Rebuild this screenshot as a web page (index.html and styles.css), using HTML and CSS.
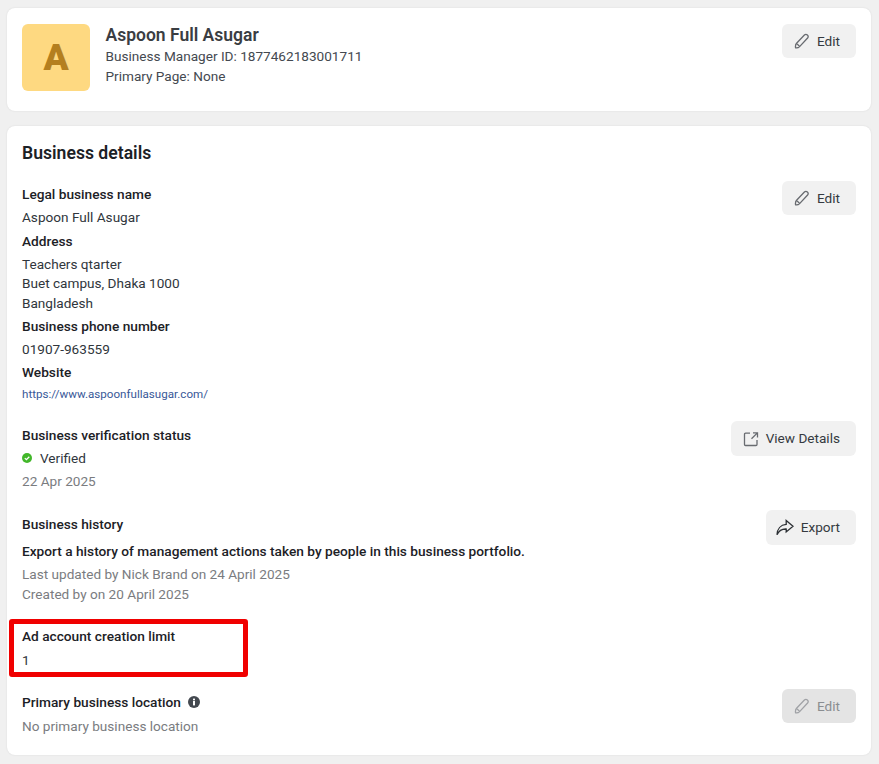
FILE: index.html
```html
<!DOCTYPE html>
<html lang="en">
<head>
<meta charset="utf-8">
<title>Business info</title>
<link rel="stylesheet" href="styles.css">
</head>
<body>
<section class="card top-card">
  <div class="avatar">A</div>
  <div class="top-info">
    <div class="biz-name">Aspoon Full Asugar</div>
    <div class="biz-line">Business Manager ID: 1877462183001711</div>
    <div class="biz-line">Primary Page: None</div>
  </div>
  <button class="btn"><svg class="ico" viewBox="0 0 16 16"><path d="M2.6 10.3 10.4 2a2.2 2.2 0 0 1 3.2 3l-8 8.6c-1 1-2.6 1.5-4 1.2-.3-1.5 0-3.4 1-4.5zM2.6 10.3l3 3.3" /></svg><span class="btn-text">Edit</span></button>
</section>

<section class="card details">
  <h2 class="title">Business details</h2>

  <div class="row legal">
    <div class="col">
      <div class="label">Legal business name</div>
      <div class="val first">Aspoon Full Asugar</div>
      <div class="label">Address</div>
      <div class="val tight street">Teachers qtarter</div>
      <div class="val tight">Buet campus, Dhaka 1000</div>
      <div class="val">Bangladesh</div>
      <div class="label">Business phone number</div>
      <div class="val">01907-963559</div>
      <div class="label">Website</div>
      <a class="link" href="#">https://www.aspoonfullasugar.com/</a>
    </div>
    <button class="btn"><svg class="ico" viewBox="0 0 16 16"><path d="M2.6 10.3 10.4 2a2.2 2.2 0 0 1 3.2 3l-8 8.6c-1 1-2.6 1.5-4 1.2-.3-1.5 0-3.4 1-4.5zM2.6 10.3l3 3.3" /></svg><span class="btn-text">Edit</span></button>
  </div>

  <div class="row verify">
    <div class="col">
      <div class="label">Business verification status</div>
      <div class="val status"><svg class="check" viewBox="0 0 10 10"><circle cx="5" cy="5" r="5" fill="#42b72a"/><path d="M2.8 5.1 4.4 6.6 7.3 3.7" fill="none" stroke="#fff" stroke-width="1.3"/></svg>Verified</div>
      <div class="val muted date">22 Apr 2025</div>
    </div>
    <button class="btn tall"><svg class="ico" viewBox="0 0 16 16"><path d="M7 2.2H2.5a1 1 0 0 0-1 1v10.3a1 1 0 0 0 1 1H13a1 1 0 0 0 1-1V9M10 1.8h4.5v4.6M14.4 1.9 8.5 7.8" /></svg><span class="btn-text">View Details</span></button>
  </div>

  <div class="row history">
    <div class="col">
      <div class="label">Business history</div>
      <div class="label desc">Export a history of management actions taken by people in this business portfolio.</div>
      <div class="val muted tight updated">Last updated by Nick Brand on 24 April 2025</div>
      <div class="val muted">Created by on 20 April 2025</div>
    </div>
    <button class="btn tall export"><svg class="ico ico-dark" viewBox="0 0 18 17"><path d="M10.2 1.5 17 7.3l-6.8 5.6V10C6 9.8 3 11.5 1 15.8c.2-5.8 3.6-10 9.2-10.4z" /></svg><span class="btn-text">Export</span></button>
  </div>

  <div class="limit">
    <div class="label">Ad account creation limit</div>
    <div class="val">1</div>
    <div class="highlight"></div>
  </div>

  <div class="row location">
    <div class="col">
      <div class="label">Primary business location<svg class="info" viewBox="0 0 12 12"><circle cx="6" cy="6" r="6" fill="#444950"/><rect x="5" y="5" width="2" height="4.4" fill="#fff"/><rect x="5" y="2.6" width="2" height="1.7" fill="#fff"/></svg></div>
      <div class="val muted">No primary business location</div>
    </div>
    <button class="btn disabled"><svg class="ico" viewBox="0 0 16 16"><path d="M2.6 10.3 10.4 2a2.2 2.2 0 0 1 3.2 3l-8 8.6c-1 1-2.6 1.5-4 1.2-.3-1.5 0-3.4 1-4.5zM2.6 10.3l3 3.3" /></svg><span class="btn-text">Edit</span></button>
  </div>
</section>
</body>
</html>
```

FILE: styles.css
```css
* { box-sizing: border-box; }
html, body { height: 100%; }
body {
  margin: 0;
  padding: 8px 8px 0 7px;
  background: #f0f0f0;
  font-family: Roboto, "Liberation Sans", sans-serif;
  font-size: 13.6px;
  color: #1c2b33;
  overflow: hidden;
}
.card {
  background: #fff;
  border-radius: 8px;
  box-shadow: 0 0 2px rgba(0,0,0,.1);
}
.top-card {
  height: 102.5px;
  padding: 16px 15px;
  display: flex;
  align-items: flex-start;
  margin-bottom: 15.5px;
}
.avatar {
  width: 68px;
  height: 67px;
  border-radius: 6px;
  background: #fed981;
  color: #b47f1f;
  font-size: 37px;
  font-weight: 900;
  display: flex;
  align-items: center;
  justify-content: center;
  margin-right: 15.5px;
}
.top-info { flex: 1; color: #444950; }
.biz-name { font-size: 17.5px; font-weight: 600; line-height: 22px; margin-bottom: 1px; color: #3a3d42; }
.biz-line { line-height: 19.5px; font-size: 13.6px; }
.btn {
  display: inline-flex;
  align-items: center;
  height: 34px;
  padding: 0 16px 0 12px;
  border: 0;
  border-radius: 6px;
  background: #f1f1f1;
  color: #353a40;
  font: 400 13.6px Roboto, "Liberation Sans", sans-serif;
  flex: none;
}
.btn-text { margin-top: -1px; }
.tall { height: 35px; }
.ico {
  width: 16px;
  height: 16px;
  margin-right: 7px;
  fill: none;
  stroke: #686b70;
  stroke-width: 1.3;
}
.ico-dark { width: 18px; height: 17px; stroke: #2b2f33; }
.export { padding-left: 10px; }
.disabled { background: #e4e4e4; color: #8a8d91; }
.disabled .ico { stroke: #a0a2a6; }
.details { height: 629px; padding: 15px 15px 16px; }
.title { margin: 0; font-size: 17.6px; font-weight: 600; line-height: 24px; color: #1c2126; }
.row { display: flex; justify-content: space-between; align-items: flex-start; }
.col { display: flex; flex-direction: column; }
.label { font-weight: 500; line-height: 20px; font-size: 13.7px; color: #1c2126; }
.val { line-height: 20px; margin: 3px 0; color: #30363c; }
.val.first { margin-bottom: 4px; }
.val.tight { margin-bottom: 0; margin-top: 0; }
.val.street { margin-top: 3px; margin-bottom: -1px; }
.val.updated { margin-top: 3px; }
.val.tight + .val { margin-top: 0; }
.muted { color: #7a7c7f; }
.link { font-size: 11.6px; line-height: 20px; margin-top: 2px; color: #385898; text-decoration: none; }
.legal { margin-top: 19px; }
.legal > .btn { margin-top: -3px; }
.verify { margin-top: 21px; }
.verify .btn { margin-top: -4px; }
.status { display: flex; align-items: center; }
.check { width: 10px; height: 10px; margin-right: 8px; }
.val.date { margin-top: 0; }
.history { margin-top: 20px; }
.history .btn { margin-top: -4px; }
.desc { margin-top: 7px; margin-bottom: 0; }
.limit { position: relative; margin-top: 19px; height: 48px; }
.limit .val { margin-top: 4px; }
.highlight {
  position: absolute;
  left: -13px;
  top: -7px;
  width: 239px;
  height: 58px;
  border: 5px solid #f00000;
  border-radius: 3px;
  pointer-events: none;
}
.location { margin-top: 18px; }
.location .btn { margin-top: -3px; }
.location .val { margin-top: 4px; }
.info { width: 12px; height: 12px; margin-left: 7px; vertical-align: -1px; }
```
